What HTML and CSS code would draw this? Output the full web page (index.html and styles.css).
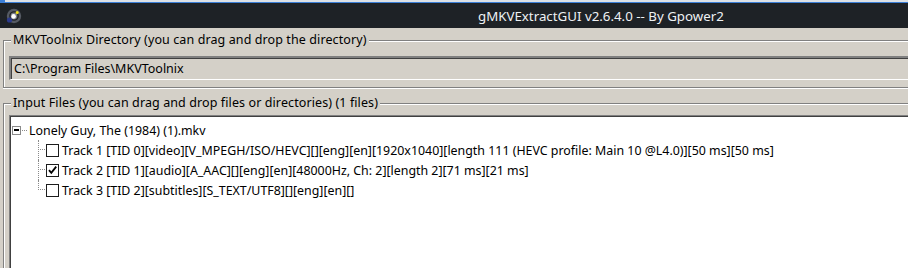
FILE: index.html
```html
<!DOCTYPE html>
<html lang="en">
<head>
    <meta charset="UTF-8">
    <title>gMKVExtractGUI v2.6.4.0 -- By Gpower2</title>
    <link rel="stylesheet" href="styles.css">
</head>
<body>

<div class="window">
    <div class="top-strip"></div>
    <div class="titlebar">
        <svg class="app-icon" width="16" height="16" viewBox="0 0 16 16">
            <circle cx="8" cy="8" r="6" fill="none" stroke="#555a63" stroke-width="2.4"/>
            <circle cx="3.5" cy="12" r="2.6" fill="#2b3a8c"/>
            <circle cx="8" cy="8" r="3.4" fill="#9aa0ab" opacity="0.7"/>
            <circle cx="7.6" cy="8.4" r="2.3" fill="#ffffff"/>
            <circle cx="11.2" cy="4.6" r="1.5" fill="#f2e21a"/>
        </svg>
        <span class="title">gMKVExtractGUI v2.6.4.0 -- By Gpower2</span>
    </div>

    <div class="client">
        <div class="group group-dir">
            <span class="group-label">MKVToolnix Directory (you can drag and drop the directory)</span>
            <div class="textbox">C:\Program Files\MKVToolnix</div>
        </div>

        <div class="group group-input">
            <span class="group-label">Input Files (you can drag and drop files or directories) (1 files)</span>
            <div class="tree">
                <div class="node root">
                    <span class="expander"><span class="minus"></span></span>
                    <span class="stub"></span>
                    <span class="node-text">Lonely Guy, The (1984) (1).mkv</span>
                </div>
                <div class="node child">
                    <span class="elbow"></span>
                    <span class="checkbox"></span>
                    <span class="node-text">Track 1 [TID 0][video][V_MPEGH/ISO/HEVC][][eng][en][1920x1040][length 111 (HEVC profile: Main 10 @L4.0)][50 ms][50 ms]</span>
                </div>
                <div class="node child">
                    <span class="elbow"></span>
                    <span class="checkbox checked">
                        <svg width="11" height="11" viewBox="0 0 11 11"><path d="M2 5.2 L4.3 7.8 L9.2 1.6" fill="none" stroke="#000" stroke-width="1.8"/></svg>
                    </span>
                    <span class="node-text">Track 2 [TID 1][audio][A_AAC][][eng][en][48000Hz, Ch: 2][length 2][71 ms][21 ms]</span>
                </div>
                <div class="node child last">
                    <span class="elbow"></span>
                    <span class="checkbox"></span>
                    <span class="node-text">Track 3 [TID 2][subtitles][S_TEXT/UTF8][][eng][en][]</span>
                </div>
            </div>
        </div>
    </div>
</div>

</body>
</html>
```

FILE: styles.css
```css
body {
    margin: 0;
    overflow: hidden;
    background-color: #d4d0c8;
    font-family: "Noto Sans", "Open Sans", sans-serif;
    font-size: 12.5px;
    color: #000;
}

.window {
    width: 1200px;
}

.top-strip {
    height: 3px;
    background-color: #dde1e6;
    box-shadow: inset 5px -1px 0 #3c7fd6;
}

.titlebar {
    height: 25px;
    background-color: #1e2226;
    display: flex;
    align-items: center;
}

.app-icon {
    margin-left: 6px;
}

.title {
    margin-left: 456px;
    color: #eef1f4;
    font-size: 13.3px;
    padding-top: 1px;
}

.client {
    padding: 12px 0 0 3px;
}

.group {
    position: relative;
    border-top: 1px solid #808080;
    border-left: 1px solid #808080;
    box-shadow: inset 1px 1px 0 #fff;
    padding-left: 5px;
}

.group-label {
    position: absolute;
    top: -10px;
    left: 7px;
    padding: 0 2px;
    background-color: #d4d0c8;
    line-height: 18px;
    letter-spacing: 0.1px;
    white-space: nowrap;
}

.group-dir {
    border-bottom: 1px solid #808080;
    box-shadow: inset 1px 1px 0 #fff, 0 1px 0 #fff;
    padding-top: 15px;
    padding-bottom: 7px;
}

.group-input {
    margin-top: 15px;
    padding-top: 11px;
    height: 200px;
}

.textbox {
    height: 21px;
    border-top: 2px solid #808080;
    border-left: 2px solid #808080;
    border-bottom: 1px solid #fff;
    box-shadow: inset 1px 1px 0 #404040;
    padding-left: 3px;
    line-height: 22px;
    white-space: nowrap;
}

.tree {
    height: 200px;
    background-color: #fff;
    border-top: 1px solid #808080;
    border-left: 1px solid #808080;
    box-shadow: inset 1px 1px 0 #404040;
    padding: 4px 0 0 1px;
    font-size: 12.4px;
}

.node {
    display: flex;
    align-items: center;
    height: 20px;
    white-space: nowrap;
}

.expander {
    width: 7px;
    height: 7px;
    border: 1px solid #8a8a8a;
    display: flex;
    align-items: center;
    justify-content: center;
    margin-left: 1px;
}

.minus {
    width: 5px;
    height: 2px;
    background-color: #000;
}

.stub {
    width: 5px;
    border-top: 1px dotted #8a8a8a;
    margin: 0 2px 0 1px;
}

.child {
    padding-left: 27px;
}

.elbow {
    position: relative;
    width: 8px;
    height: 20px;
}

.elbow::before {
    content: "";
    position: absolute;
    left: 0;
    top: 0;
    height: 100%;
    border-left: 1px dotted #8a8a8a;
}

.last .elbow::before {
    height: 10px;
}

.elbow::after {
    content: "";
    position: absolute;
    left: 0;
    top: 9px;
    width: 7px;
    border-top: 1px dotted #8a8a8a;
}

.checkbox {
    width: 11px;
    height: 11px;
    border: 1px solid #1c1c1c;
    background-color: #fff;
    display: flex;
    align-items: center;
    justify-content: center;
    margin-right: 3px;
}
```
